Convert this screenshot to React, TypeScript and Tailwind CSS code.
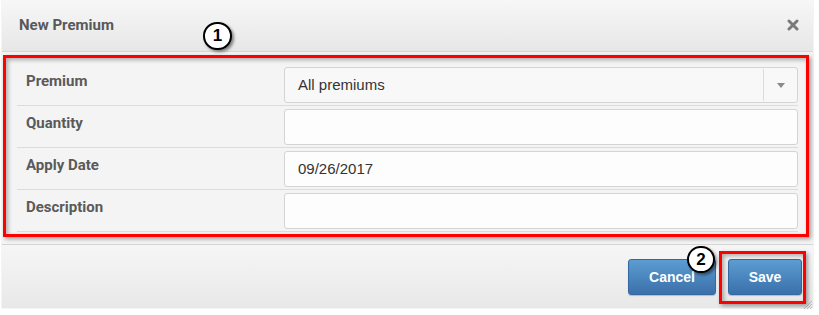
import React from "react";

const rows = [
  { label: "Premium", kind: "select", value: "All premiums" },
  { label: "Quantity", kind: "input", value: "" },
  { label: "Apply Date", kind: "input", value: "09/26/2017" },
  { label: "Description", kind: "input", value: "" },
];

export default function App() {
  return (
    <div className="relative w-[819px] h-[315px] bg-white overflow-hidden">
      <div className="ml-[2px] w-[811px] bg-[#f4f4f4] flex flex-col shadow-[0_0_1px_rgba(0,0,0,0.25)]">
        {/* header */}
        <div className="h-[52px] flex items-center justify-between pl-[17px] pr-[14px] border-b border-[#d6d6d6] bg-gradient-to-b from-[#f7f7f7] to-[#e7e7e7]">
          <span className="font-['Roboto',sans-serif] font-bold text-[15px] text-[#585858] -mt-[1px]">
            New Premium
          </span>
          <svg width="12" height="12" viewBox="0 0 12 12" className="-mt-[1px]">
            <path d="M2 2 L10 10 M10 2 L2 10" stroke="#7a7a7a" strokeWidth="3" strokeLinecap="round" />
          </svg>
        </div>
        {/* body */}
        <div className="px-[15px] pt-[12px] pb-[12px]">
          {rows.map((r) => (
            <div key={r.label} className="flex h-[42px] border-b border-[#dcdcdc]">
              <div className="w-[267px] pl-[9px] pt-[7px] leading-[20px] font-['Roboto',sans-serif] font-bold text-[15px] text-[#5a5a5a]">
                {r.label}
              </div>
              <div className="flex-1 pt-[3px]">
                {r.kind === "select" ? (
                  <div className="h-[36px] flex items-center border border-[#d4d4d4] rounded-[3px] bg-[#f8f8f8]">
                    <span className="flex-1 pl-[13px] font-['Liberation_Sans',Arial,sans-serif] text-[15px] text-[#333]">
                      {r.value}
                    </span>
                    <div className="w-[34px] h-[32px] border-l border-[#dcdcdc] flex items-center justify-center">
                      <svg width="8" height="5" viewBox="0 0 8 5">
                        <path d="M0 0 H8 L4 5 Z" fill="#8a8a8a" />
                      </svg>
                    </div>
                  </div>
                ) : (
                  <div className="h-[36px] flex items-center border border-[#d4d4d4] rounded-[3px] bg-[#fdfdfd] pl-[13px] font-['Liberation_Sans',Arial,sans-serif] text-[15px] text-[#333]">
                    {r.value}
                  </div>
                )}
              </div>
            </div>
          ))}
        </div>
        {/* footer */}
        <div className="h-[64px] border-t border-[#d3d3d3] bg-gradient-to-b from-[#f6f6f6] to-[#e8e8e8] flex justify-end items-start pt-[14px] pr-[11px] gap-[12px]">
          <button className="w-[88px] h-[36px] rounded-[3px] border border-[#3567a0] bg-gradient-to-b from-[#5c9dd2] to-[#3b70aa] text-white font-['Liberation_Sans',Arial,sans-serif] font-bold text-[14px] shadow-[0_1px_1px_rgba(0,0,0,0.2)]">
            Cancel
          </button>
          <button className="w-[74px] h-[36px] rounded-[3px] border border-[#3567a0] bg-gradient-to-b from-[#5c9dd2] to-[#3b70aa] text-white font-['Liberation_Sans',Arial,sans-serif] font-bold text-[14px] shadow-[0_1px_1px_rgba(0,0,0,0.2)]">
            Save
          </button>
        </div>
      </div>

      {/* resize grip */}
      <svg className="absolute left-[802px] top-[299px]" width="11" height="11" viewBox="0 0 11 11">
        <path d="M10 2 L2 10 M10 5 L5 10 M10 8 L8 10" stroke="#bdbdbd" strokeWidth="1" />
      </svg>

      {/* annotations */}
      <div className="absolute left-[3px] top-[55px] w-[806px] h-[182px] border-[3px] border-[#ff0000] shadow-[2px_2px_4px_rgba(0,0,0,0.35),inset_2px_2px_4px_rgba(0,0,0,0.3)]" />
      <div className="absolute left-[719px] top-[251px] w-[87px] h-[53px] border-[3px] border-[#ff0000] shadow-[2px_2px_4px_rgba(0,0,0,0.35),inset_2px_2px_4px_rgba(0,0,0,0.3)]" />

      <div className="absolute left-[203px] top-[22px] w-[29px] h-[28px] rounded-full bg-white border-2 border-black flex items-center justify-center shadow-[2px_2px_3px_rgba(0,0,0,0.45)] font-['Liberation_Sans',Arial,sans-serif] font-bold text-[17px] text-black">
        1
      </div>
      <div className="absolute left-[687px] top-[246px] w-[28px] h-[27px] rounded-full bg-white border-2 border-black flex items-center justify-center shadow-[2px_2px_3px_rgba(0,0,0,0.45)] font-['Liberation_Sans',Arial,sans-serif] font-bold text-[17px] text-black">
        2
      </div>
    </div>
  );
}
